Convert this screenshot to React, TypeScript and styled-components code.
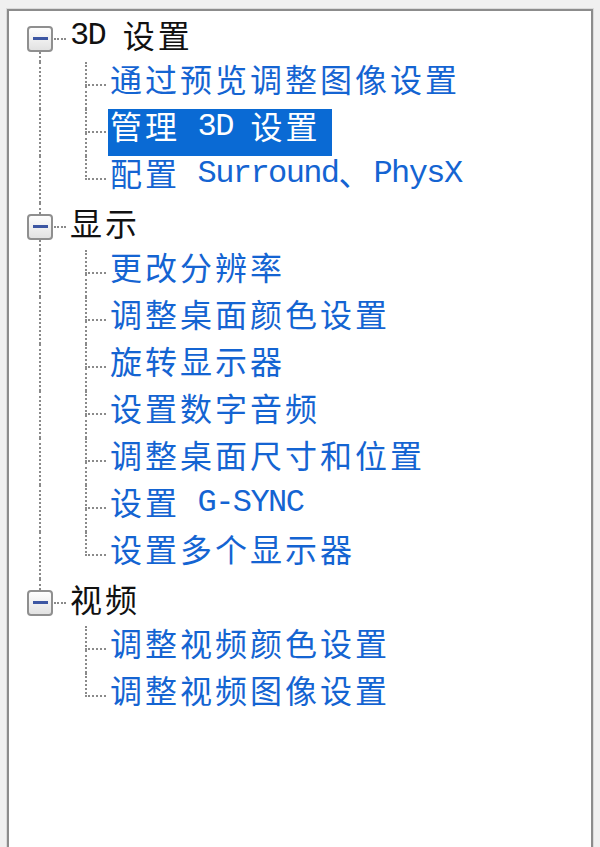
import React from "react";
import styled, { createGlobalStyle } from "styled-components";

const Global = createGlobalStyle`
  html, body { margin: 0; padding: 0; background: #f0f0f0; overflow: hidden; }
  body { font-family: "Noto Sans CJK SC", "Liberation Sans", sans-serif; }
`;

const Page = styled.div`
  width: 600px;
  height: 847px;
  padding: 9px 7px 0 7px;
  box-sizing: border-box;
  overflow: hidden;
`;

const Panel = styled.div`
  height: 860px;
  background: #ffffff;
  border: 2px solid #8c8c8c;
  border-bottom: none;
  box-shadow: 0 0 0 1px #dadada;
  padding-top: 4px;
  box-sizing: border-box;
`;

const Row = styled.div`
  display: flex;
  align-items: stretch;
  height: 47px;
`;

const Rail = styled.div`
  width: 26px;
  margin-left: 18px;
  flex-shrink: 0;
  display: flex;
  flex-direction: column;
  align-items: center;
`;

const RailLine = styled.div<{ $on: boolean }>`
  flex: 1;
  width: 0;
  border-left: ${(p) => (p.$on ? "2px dotted #8a8a8a" : "none")};
`;

const Toggle = styled.div`
  width: 26px;
  height: 26px;
  flex-shrink: 0;
  box-sizing: border-box;
  border: 2px solid #8f8f8f;
  border-radius: 4px;
  background: linear-gradient(#fefefe, #e2e2e2);
  display: flex;
  align-items: center;
  justify-content: center;
`;

const Minus = styled.span`
  width: 15px;
  height: 3px;
  background: #3d57a3;
`;

const Stub = styled.div`
  width: 12px;
  margin-left: 1px;
  align-self: center;
  border-top: 2px dotted #8a8a8a;
`;

const Elbow = styled.div`
  width: 21px;
  margin-left: 32px;
  flex-shrink: 0;
  display: flex;
  flex-direction: column;
`;

const ElbowTop = styled.div`
  height: 50%;
  box-sizing: border-box;
  border-left: 2px dotted #8a8a8a;
  border-bottom: 2px dotted #8a8a8a;
`;

const ElbowBottom = styled.div<{ $on: boolean }>`
  flex: 1;
  border-left: ${(p) => (p.$on ? "2px dotted #8a8a8a" : "none")};
`;

const Label = styled.span<{ $kind: "parent" | "child"; $selected?: boolean }>`
  display: flex;
  align-items: center;
  margin-left: 2px;
  padding: 0 12px ${(p) => (p.$kind === "parent" ? "10px" : "16px")} 2px;
  white-space: nowrap;
  font-size: 32px;
  letter-spacing: 3px;
  line-height: 1;
  color: ${(p) =>
    p.$selected ? "#ffffff" : p.$kind === "parent" ? "#111111" : "#1464d2"};
  background: ${(p) => (p.$selected ? "#0a6ad4" : "transparent")};
`;

const Latin = styled.span`
  font-family: "Liberation Mono", "DejaVu Sans Mono", monospace;
  font-size: 32px;
  letter-spacing: -1.6px;
  white-space: pre;
  position: relative;
  top: 2px;
`;

type Node = { label: string; selected?: boolean; children?: Node[] };

const tree: Node[] = [
  {
    label: "3D 设置",
    children: [
      { label: "通过预览调整图像设置" },
      { label: "管理 3D 设置", selected: true },
      { label: "配置 Surround、PhysX" },
    ],
  },
  {
    label: "显示",
    children: [
      { label: "更改分辨率" },
      { label: "调整桌面颜色设置" },
      { label: "旋转显示器" },
      { label: "设置数字音频" },
      { label: "调整桌面尺寸和位置" },
      { label: "设置 G-SYNC" },
      { label: "设置多个显示器" },
    ],
  },
  {
    label: "视频",
    children: [{ label: "调整视频颜色设置" }, { label: "调整视频图像设置" }],
  },
];

function renderText(s: string) {
  return s
    .split(/([\x20-\x7E]+)/)
    .filter((part) => part.length > 0)
    .map((part, i) =>
      /^[\x20-\x7E]+$/.test(part) ? (
        <Latin key={i}>{part}</Latin>
      ) : (
        <React.Fragment key={i}>{part}</React.Fragment>
      )
    );
}

export default function App() {
  return (
    <>
      <Global />
      <Page>
        <Panel>
          {tree.map((parent, pi) => {
            const isFirst = pi === 0;
            const isLast = pi === tree.length - 1;
            const kids = parent.children ?? [];
            return (
              <React.Fragment key={parent.label}>
                <Row>
                  <Rail>
                    <RailLine $on={!isFirst} />
                    <Toggle>
                      <Minus />
                    </Toggle>
                    <RailLine $on={!isLast} />
                  </Rail>
                  <Stub />
                  <Label $kind="parent">{renderText(parent.label)}</Label>
                </Row>
                {kids.map((child, ci) => (
                  <Row key={child.label}>
                    <Rail>
                      <RailLine $on={!isLast} />
                    </Rail>
                    <Elbow>
                      <ElbowTop />
                      <ElbowBottom $on={ci < kids.length - 1} />
                    </Elbow>
                    <Label $kind="child" $selected={child.selected}>
                      {renderText(child.label)}
                    </Label>
                  </Row>
                ))}
              </React.Fragment>
            );
          })}
        </Panel>
      </Page>
    </>
  );
}
